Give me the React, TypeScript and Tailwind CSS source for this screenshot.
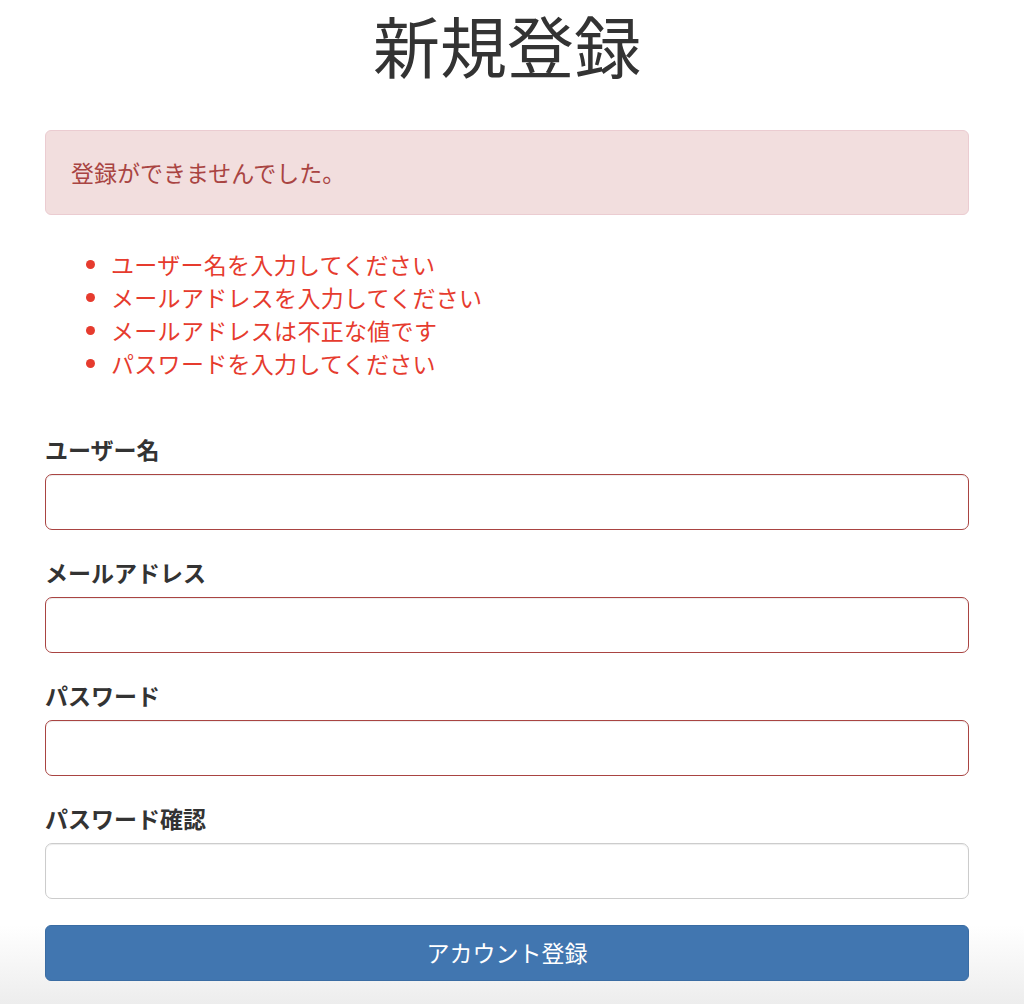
import React from 'react';

const errors = [
  'ユーザー名を入力してください',
  'メールアドレスを入力してください',
  'メールアドレスは不正な値です',
  'パスワードを入力してください',
];

const fields = [
  { label: 'ユーザー名', type: 'text', invalid: true },
  { label: 'メールアドレス', type: 'email', invalid: true },
  { label: 'パスワード', type: 'password', invalid: true },
  { label: 'パスワード確認', type: 'password', invalid: false },
];

export default function App() {
  return (
    <div
      className="min-h-[1004px] bg-[linear-gradient(to_bottom,#ffffff_0,#ffffff_925px,#ededed_1004px)] text-[#333]"
      style={{ fontFamily: '"Noto Sans CJK JP", "Noto Sans", sans-serif' }}
    >
      <div className="ml-[45px] w-[924px]">
        <h1 className="pt-[4px] text-center text-[67px] font-normal leading-[1.2] text-[#333]">新規登録</h1>

        <div className="mt-[46px] rounded-[6px] border border-[#ebccd1] bg-[#f2dede] p-[25px] text-[23px] leading-[33px] text-[#a94442]">
          登録ができませんでした。
        </div>

        <ul className="mt-[33px] list-disc pl-[66px] text-[23px] leading-[32.8px] tracking-[0.3px] text-[#e63b2e]">
          {errors.map((msg) => (
            <li key={msg}>{msg}</li>
          ))}
        </ul>

        <form className="mt-[53px]" onSubmit={(e) => e.preventDefault()}>
          {fields.map((f) => (
            <div key={f.label} className="mb-[26px]">
              <label className="mb-[8px] block text-[23px] font-bold leading-[33px] text-[#333]">{f.label}</label>
              <input
                type={f.type}
                className={
                  f.invalid
                    ? 'block h-[56px] w-full rounded-[7px] border-[1.5px] border-[#a94442] bg-white px-[20px] text-[23px] shadow-[inset_0_1px_1px_rgba(0,0,0,0.075)] outline-none'
                    : 'block h-[56px] w-full rounded-[7px] border-[1.5px] border-[#cccccc] bg-white px-[20px] text-[23px] shadow-[inset_0_1px_1px_rgba(0,0,0,0.075)] outline-none'
                }
              />
            </div>
          ))}
          <button
            type="submit"
            className="block h-[56px] w-full rounded-[6px] border border-[#3a6ca3] bg-[#4176b0] text-[23px] leading-[33px] text-white"
          >
            アカウント登録
          </button>
        </form>
      </div>
    </div>
  );
}
